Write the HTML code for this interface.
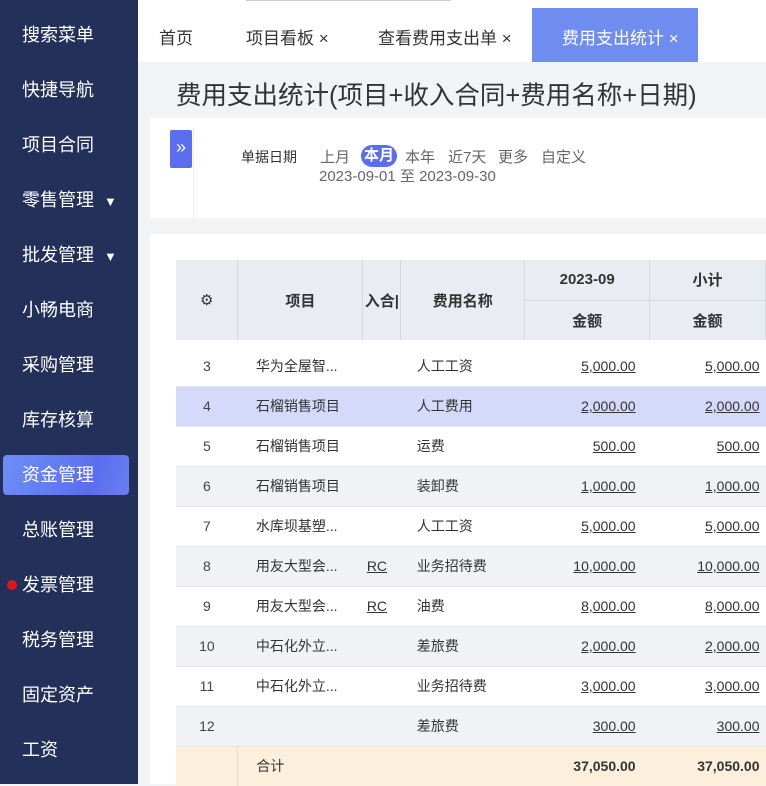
<!DOCTYPE html><html><head><meta charset="utf-8"><style>
*{margin:0;padding:0;box-sizing:border-box}
body{width:766px;height:784px;overflow:hidden;background:#f2f3f5;font-family:"Liberation Sans","Noto Sans CJK SC",sans-serif;position:relative}
.sb{position:absolute;left:0;top:0;width:138px;height:784px;background:#22305a}
.si{position:absolute;left:22px;color:#fff;font-size:18px;line-height:24px}
.act{position:absolute;left:3px;top:455px;width:126px;height:40px;border-radius:4px;background:linear-gradient(110deg,#6e8ff6,#5b6ef0 70%,#6a7ef2)}
.tri{font-size:13px;margin-left:10px}
.tabs{position:absolute;left:138px;top:0;width:628px;height:62px;background:#fff}
.tab{position:absolute;top:24px;font-size:17px;color:#333}
.tabact{position:absolute;left:394px;top:8px;width:166px;height:54px;background:#6f8cf0;color:#fff;font-size:17px;padding:16px 0 0 30px}
.title{position:absolute;left:176px;top:75px;font-size:25.5px;color:#333}
.filt{position:absolute;left:150px;top:118px;width:616px;height:100px;background:#fff}
.tp{position:absolute;left:150px;top:234px;width:616px;height:550px;background:#fff}
table{position:absolute;left:176px;top:260px;border-collapse:collapse;font-size:14px;color:#333;table-layout:fixed}
td{height:40px;white-space:nowrap;overflow:hidden}
.h td{background:#e9ecf2;font-weight:bold;text-align:center;border-right:1px solid #d5d9e0;color:#333;font-size:15px}
.n{text-align:center;color:#444}
.r{text-align:right;padding-right:14px}
.u{text-decoration:underline}
.g td{background:#f0f2f5}
.hl td{background:#d6dafa}
.tot td{background:#fcf0dd;font-weight:bold}
tr.row td{border-bottom:1px solid #e4e6ea}
.op{position:absolute;top:28px;font-size:15px;color:#666}
</style></head><body>
<div class="sb">
<div class="act"></div>
<div class="si" style="top:23px">搜索菜单</div>
<div class="si" style="top:78px">快捷导航</div>
<div class="si" style="top:133px">项目合同</div>
<div class="si" style="top:188px">零售管理<span class="tri">▼</span></div>
<div class="si" style="top:243px">批发管理<span class="tri">▼</span></div>
<div class="si" style="top:298px">小畅电商</div>
<div class="si" style="top:353px">采购管理</div>
<div class="si" style="top:408px">库存核算</div>
<div class="si" style="top:463px">资金管理</div>
<div class="si" style="top:518px">总账管理</div>
<div style="position:absolute;left:7px;top:580px;width:10px;height:10px;border-radius:50%;background:#e0161c"></div>
<div class="si" style="top:573px">发票管理</div>
<div class="si" style="top:628px">税务管理</div>
<div class="si" style="top:683px">固定资产</div>
<div class="si" style="top:738px">工资</div>
</div>
<div class="tabs">
<div style="position:absolute;left:108px;top:0;width:205px;height:1px;background:#ccc"></div>
<div class="tab" style="left:21px">首页</div>
<div class="tab" style="left:108px">项目看板 ×</div>
<div class="tab" style="left:240px">查看费用支出单 ×</div>
<div class="tabact">费用支出统计 ×</div>
</div>
<div class="title">费用支出统计(项目+收入合同+费用名称+日期)</div>
<div class="filt">
<div style="position:absolute;left:20px;top:12px;width:22px;height:38px;background:#5b6ef0;border-radius:2px;color:#fff;font-size:18px;text-align:center;line-height:34px">»</div>
<div style="position:absolute;left:43px;top:10px;width:1px;height:90px;background:#eee"></div>
<div style="position:absolute;left:91px;top:29px;font-size:14px;color:#333">单据日期</div>
<div class="op" style="left:170px">上月</div>
<div class="op" style="left:211px;width:36px;height:22px;top:27px;background:#5b6ef0;color:#fff;font-weight:bold;border-radius:11px;text-align:center;line-height:22px">本月</div>
<div class="op" style="left:255px">本年</div>
<div class="op" style="left:298px">近7天</div>
<div class="op" style="left:348px">更多</div>
<div class="op" style="left:391px">自定义</div>
<div style="position:absolute;left:169px;top:47px;font-size:15px;color:#666">2023-09-01 至 2023-09-30</div>
</div>
<div class="tp"></div>
<table>
<colgroup><col style="width:62px"><col style="width:125px"><col style="width:38px"><col style="width:124px"><col style="width:125px"><col style="width:116px"></colgroup>
<tr class="h"><td rowspan="2" style="height:78px;font-weight:normal">⚙</td><td rowspan="2">项目</td><td rowspan="2">入合|</td><td rowspan="2">费用名称</td><td style="height:38px;border-bottom:1px solid #d5d9e0">2023-09</td><td style="border-bottom:1px solid #d5d9e0">小计</td></tr>
<tr class="h"><td style="height:40px">金额</td><td>金额</td></tr>
<tr><td colspan="6" style="height:6px;background:#fff"></td></tr>
<tr class="row"><td class="n">3</td><td style="padding-left:18px">华为全屋智...</td><td></td><td style="padding-left:16px">人工工资</td><td class="r"><span class="u">5,000.00</span></td><td class="r" style="padding-right:6px"><span class="u">5,000.00</span></td></tr>
<tr class="row hl"><td class="n">4</td><td style="padding-left:18px">石榴销售项目</td><td></td><td style="padding-left:16px">人工费用</td><td class="r"><span class="u">2,000.00</span></td><td class="r" style="padding-right:6px"><span class="u">2,000.00</span></td></tr>
<tr class="row"><td class="n">5</td><td style="padding-left:18px">石榴销售项目</td><td></td><td style="padding-left:16px">运费</td><td class="r"><span class="u">500.00</span></td><td class="r" style="padding-right:6px"><span class="u">500.00</span></td></tr>
<tr class="row g"><td class="n">6</td><td style="padding-left:18px">石榴销售项目</td><td></td><td style="padding-left:16px">装卸费</td><td class="r"><span class="u">1,000.00</span></td><td class="r" style="padding-right:6px"><span class="u">1,000.00</span></td></tr>
<tr class="row"><td class="n">7</td><td style="padding-left:18px">水库坝基塑...</td><td></td><td style="padding-left:16px">人工工资</td><td class="r"><span class="u">5,000.00</span></td><td class="r" style="padding-right:6px"><span class="u">5,000.00</span></td></tr>
<tr class="row g"><td class="n">8</td><td style="padding-left:18px">用友大型会...</td><td style="padding-left:4px"><span class="u">RC</span></td><td style="padding-left:16px">业务招待费</td><td class="r"><span class="u">10,000.00</span></td><td class="r" style="padding-right:6px"><span class="u">10,000.00</span></td></tr>
<tr class="row"><td class="n">9</td><td style="padding-left:18px">用友大型会...</td><td style="padding-left:4px"><span class="u">RC</span></td><td style="padding-left:16px">油费</td><td class="r"><span class="u">8,000.00</span></td><td class="r" style="padding-right:6px"><span class="u">8,000.00</span></td></tr>
<tr class="row g"><td class="n">10</td><td style="padding-left:18px">中石化外立...</td><td></td><td style="padding-left:16px">差旅费</td><td class="r"><span class="u">2,000.00</span></td><td class="r" style="padding-right:6px"><span class="u">2,000.00</span></td></tr>
<tr class="row"><td class="n">11</td><td style="padding-left:18px">中石化外立...</td><td></td><td style="padding-left:16px">业务招待费</td><td class="r"><span class="u">3,000.00</span></td><td class="r" style="padding-right:6px"><span class="u">3,000.00</span></td></tr>
<tr class="row g"><td class="n">12</td><td></td><td></td><td style="padding-left:16px">差旅费</td><td class="r"><span class="u">300.00</span></td><td class="r" style="padding-right:6px"><span class="u">300.00</span></td></tr>
<tr class="tot"><td style="border-right:1px solid #e8dcc8"></td><td style="padding-left:18px;font-weight:normal">合计</td><td></td><td></td><td class="r">37,050.00</td><td class="r" style="padding-right:6px">37,050.00</td></tr>
</table>
</body></html>
